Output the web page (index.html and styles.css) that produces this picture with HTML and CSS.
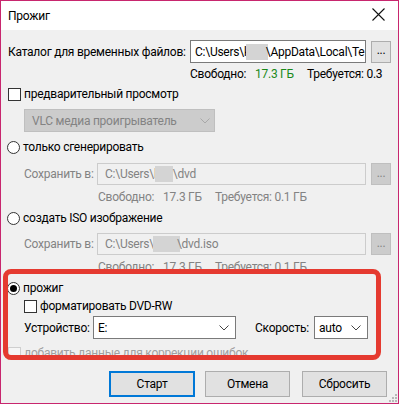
FILE: index.html
```html
<!DOCTYPE html>
<html>
<head>
<meta charset="utf-8">
<link rel="stylesheet" href="styles.css">
</head>
<body>
<div class="window">
  <div class="titlebar">
    <span class="title">Прожиг</span>
    <svg class="close" width="13" height="13" viewBox="0 0 13 13"><path d="M0.5 0.5L12.5 12.5M12.5 0.5L0.5 12.5" stroke="#111" stroke-width="1.1" fill="none"/></svg>
  </div>
  <div class="content">
    <div class="row row-dir">
      <span class="lbl-dir">Каталог для временных файлов:</span>
      <div class="field field-dir">C:\Users\k<span class="blur"></span>\AppData\Local\Te</div>
      <span class="btn-dots">...</span>
    </div>
    <div class="free free-dir">
      <span class="c1">Свободно:</span><span class="c2 green">17.3 ГБ</span><span class="c3">Требуется: 0.3</span>
    </div>
    <label class="opt opt-preview"><span class="check"></span>предварительный просмотр</label>
    <div class="select select-player">
      <span>VLC медиа проигрыватель</span>
      <svg class="chev" width="10" height="6" viewBox="0 0 10 6"><path d="M0.5 0.5L5 5L9.5 0.5" stroke="#a8a8a8" fill="none"/></svg>
    </div>
    <label class="opt opt-gen"><span class="radio"></span>только сгенерировать</label>
    <div class="row row-save row-save1">
      <span class="lbl-save">Сохранить в:</span>
      <div class="field field-save">C:\Users\k<span class="blur blur-s"></span>\dvd</div>
      <span class="btn-dots disabled">...</span>
    </div>
    <div class="free free-sub">
      <span class="c1">Свободно:</span><span class="c2">17.3 ГБ</span><span class="c3">Требуется: 0.1 ГБ</span>
    </div>
    <label class="opt opt-iso"><span class="radio"></span>создать ISO изображение</label>
    <div class="row row-save row-save2">
      <span class="lbl-save">Сохранить в:</span>
      <div class="field field-save">C:\Users\<span class="blur blur-l"></span>\dvd.iso</div>
      <span class="btn-dots disabled">...</span>
    </div>
    <div class="free free-sub">
      <span class="c1">Свободно:</span><span class="c2">17.3 ГБ</span><span class="c3">Требуется: 0.1 ГБ</span>
    </div>
    <label class="opt opt-burn"><span class="radio on"></span>прожиг</label>
    <label class="opt opt-format"><span class="check"></span>форматировать DVD-RW</label>
    <div class="row row-device">
      <span class="lbl-dev">Устройство:</span>
      <div class="select select-dev">
        <span>E:</span>
        <svg class="chev" width="10" height="6" viewBox="0 0 10 6"><path d="M0.5 0.5L5 5L9.5 0.5" stroke="#444" fill="none"/></svg>
      </div>
      <span class="lbl-speed">Скорость:</span>
      <div class="select select-speed">
        <span>auto</span>
        <svg class="chev" width="10" height="6" viewBox="0 0 10 6"><path d="M0.5 0.5L5 5L9.5 0.5" stroke="#444" fill="none"/></svg>
      </div>
    </div>
    <label class="opt opt-ecc"><span class="check disabled"></span>добавить данные для коррекции ошибок</label>
    <div class="buttons">
      <span class="btn primary">Старт</span>
      <span class="btn btn-cancel">Отмена</span>
      <span class="btn btn-reset">Сбросить</span>
    </div>
    <div class="highlight"></div>
    <svg class="grip" width="8" height="8" viewBox="0 0 8 8">
      <rect x="6" y="0" width="2" height="2" fill="#b8b8b8"/>
      <rect x="3" y="3" width="2" height="2" fill="#b8b8b8"/>
      <rect x="6" y="3" width="2" height="2" fill="#b8b8b8"/>
      <rect x="0" y="6" width="2" height="2" fill="#b8b8b8"/>
      <rect x="3" y="6" width="2" height="2" fill="#b8b8b8"/>
      <rect x="6" y="6" width="2" height="2" fill="#b8b8b8"/>
    </svg>
  </div>
</div>
</body>
</html>
```

FILE: styles.css
```css
* { box-sizing: border-box; }
html, body { margin: 0; padding: 0; }
body {
  width: 399px;
  height: 404px;
  overflow: hidden;
  font-family: Roboto, "Liberation Sans", sans-serif;
  font-size: 12px;
  letter-spacing: -0.25px;
  color: #000;
  background: #f0f0f0;
  white-space: nowrap;
}
.window {
  width: 399px;
  height: 404px;
  border: 1px solid #c8266e;
  background: #f0f0f0;
  display: flex;
  flex-direction: column;
  overflow: hidden;
}
.titlebar {
  height: 29px;
  background: #fff;
  display: flex;
  align-items: center;
  justify-content: space-between;
  padding: 0 13px 0 7px;
  flex: none;
}
.title { font-size: 12px; }
.close { display: block; margin-top: -3px; }
.content {
  position: relative;
  flex: 1;
  padding: 0 0 0 7px;
}
.row { display: flex; align-items: center; }
.field {
  height: 23px;
  border: 1px solid #7a7a7a;
  background: #fff;
  padding: 0 0 0 4px;
  display: flex;
  align-items: center;
  overflow: hidden;
  flex: none;
}
.blur {
  display: inline-block;
  width: 22px;
  height: 16px;
  background: #d4d4d4;
  margin: 0 -2px 0 -4px;
}
.blur-s { width: 18px; margin: 0 0 0 -5px; }
.blur-l { width: 27px; margin: 0 -3px 0 -1px; }
.btn-dots {
  width: 20px;
  height: 22px;
  margin-left: 5px;
  border: 1px solid #adadad;
  background: #e1e1e1;
  display: flex;
  align-items: center;
  justify-content: center;
  padding-bottom: 3px;
  flex: none;
}
.btn-dots.disabled {
  background: #cccccc;
  border-color: #bfbfbf;
  color: #838383;
}
.row-dir { margin-top: 10px; }
.lbl-dir { width: 182px; flex: none; overflow: hidden; }
.field-dir { width: 176px; }
.free { display: flex; height: 16px; align-items: center; }
.free .c1 { width: 65px; flex: none; }
.free .c2 { width: 52px; flex: none; }
.green { color: #1a8a1a; }
.free-dir { margin: 3px 0 0 182px; }
.free-sub { margin: 4px 0 0 90px; color: #838383; }
.opt {
  display: flex;
  align-items: center;
  height: 16px;
}
.check {
  width: 13px;
  height: 13px;
  border: 1px solid #333;
  background: #fff;
  margin-right: 3px;
  flex: none;
}
.check.disabled { border-color: #cfcfcf; background: #f6f6f6; }
.radio {
  width: 13px;
  height: 13px;
  border: 1px solid #333;
  border-radius: 50%;
  background: #fff;
  margin-right: 3px;
  flex: none;
  position: relative;
  margin-left: -1px;
}
.radio.on::after {
  content: "";
  position: absolute;
  left: 2px; top: 2px;
  width: 7px; height: 7px;
  border-radius: 50%;
  background: #000;
}
.opt-preview { margin-top: 4px; }
.select {
  display: flex;
  align-items: center;
  justify-content: space-between;
  height: 23px;
  padding: 0 4px 0 4px;
  border: 1px solid #7a7a7a;
  background: #fff;
  flex: none;
}
.select-player {
  margin: 7px 0 0 16px;
  width: 191px;
  background: #cccccc;
  border-color: #bfbfbf;
  color: #838383;
  padding-left: 7px;
}
.opt-gen { margin-top: 7px; }
.row-save { padding-left: 16px; }
.row-save1 { margin-top: 8px; }
.lbl-save { width: 73px; color: #838383; flex: none; }
.field-save {
  width: 269px;
  height: 22px;
  background: #f0f0f0;
  border-color: #cccccc;
  color: #838383;
  padding-left: 7px;
}
.opt-iso { margin-top: 5px; }
.row-save2 { margin-top: 7px; }
.opt-burn { margin-top: 5px; }
.opt-format { margin: 2px 0 0 16px; }
.row-device { margin: 2px 0 0 16px; height: 23px; }
.lbl-dev { width: 69px; flex: none; }
.select-dev { width: 143px; padding-right: 6px; }
.lbl-speed { margin-left: 19px; width: 59px; flex: none; }
.select-speed { width: 54px; padding-right: 6px; }
.opt-ecc { margin-top: 6px; color: #a0a0a0; }
.buttons {
  display: flex;
  margin: 10px 0 0 101px;
}
.btn {
  width: 85px;
  height: 26px;
  border: 1px solid #adadad;
  background: #e1e1e1;
  display: flex;
  align-items: center;
  justify-content: center;
  padding-bottom: 1px;
  flex: none;
}
.btn.primary { width: 86px; border: 2px solid #0078d7; }
.btn-cancel { margin-left: 10px; }
.btn-reset { margin-left: 12px; }
.highlight {
  position: absolute;
  left: 2px;
  top: 239px;
  width: 378px;
  height: 91px;
  border: 5px solid #e53a30;
  border-radius: 8px;
  pointer-events: none;
}
.grip { position: absolute; right: 1px; bottom: 1px; }
```
